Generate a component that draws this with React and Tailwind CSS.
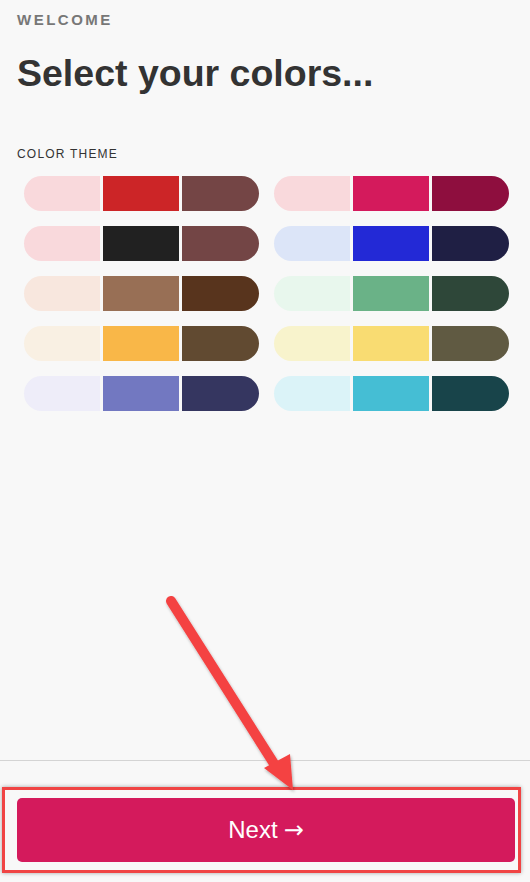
import React from "react";

const themes = [
  [["#f9d9dc", "#cc2527", "#744545"], ["#f9d9dc", "#d41a5c", "#8e0e3e"]],
  [["#f9d9dc", "#212121", "#734545"], ["#dce5f8", "#2329d6", "#1f1f44"]],
  [["#f8e7de", "#986f55", "#58341d"], ["#e8f7ed", "#6ab287", "#2e4739"]],
  [["#f9f0e3", "#f9b748", "#614a31"], ["#f8f3cc", "#f9dc72", "#605a42"]],
  [["#eeedf9", "#7278c1", "#353660"], ["#dbf3f8", "#45bed4", "#18444a"]],
];

function Swatch({ colors }) {
  return (
    <div className="flex h-[35px] w-[235px] gap-[3px] cursor-pointer">
      <div className="w-[76px] rounded-l-full" style={{ backgroundColor: colors[0] }} />
      <div className="w-[76px]" style={{ backgroundColor: colors[1] }} />
      <div className="flex-1 rounded-r-full" style={{ backgroundColor: colors[2] }} />
    </div>
  );
}

export default function App() {
  return (
    <div
      className="relative w-[530px] h-[882px] bg-[#f8f8f8] flex flex-col overflow-hidden"
      style={{ fontFamily: '"Liberation Sans", Arial, sans-serif' }}
    >
      <div className="flex-1 px-[17px]">
        <div className="pt-[11px] text-[15px] leading-[18px] font-bold tracking-[2.5px] text-[#777777]">
          WELCOME
        </div>
        <h1 className="mt-[22px] text-[37.5px] leading-[44px] font-bold text-[#333333]">
          Select your colors...
        </h1>
        <div className="mt-[52px] text-[12px] leading-[14px] tracking-[1.2px] text-[#333333]">
          COLOR THEME
        </div>
        <div className="mt-[15px] pl-[7px] flex flex-col gap-[15px]">
          {themes.map((row, i) => (
            <div key={i} className="flex gap-[15px]">
              <Swatch colors={row[0]} />
              <Swatch colors={row[1]} />
            </div>
          ))}
        </div>
      </div>
      <div className="border-t border-[#d4d4d4] pt-[37px] pb-[19px] px-[17px] mb-[1px]">
        <button className="w-[498px] h-[64px] rounded-[5px] bg-[#d41a5c] text-white text-[24px] flex items-center justify-center">
          <span>Next</span>
          <span className="ml-[6px]" style={{ fontFamily: '"DejaVu Sans", sans-serif' }}>→</span>
        </button>
      </div>

      {/* annotation overlay: red box */}
      <div className="absolute left-[2px] top-[787px] w-[519px] h-[86px] border-[3px] border-[#f04444] shadow-[0_0_4px_rgba(0,0,0,0.35)] pointer-events-none" />
      {/* annotation overlay: arrow */}
      <svg className="absolute left-0 top-0 pointer-events-none" width="530" height="882" viewBox="0 0 530 882">
        <defs>
          <filter id="sh" x="-20%" y="-20%" width="140%" height="140%">
            <feDropShadow dx="1" dy="2" stdDeviation="1.5" floodColor="#000" floodOpacity="0.3" />
          </filter>
        </defs>
        <g filter="url(#sh)">
          <line x1="171" y1="601" x2="278" y2="770" stroke="#f44343" strokeWidth="10" strokeLinecap="round" />
          <polygon points="264,768 290,754 293,790" fill="#f44343" />
        </g>
      </svg>
    </div>
  );
}
